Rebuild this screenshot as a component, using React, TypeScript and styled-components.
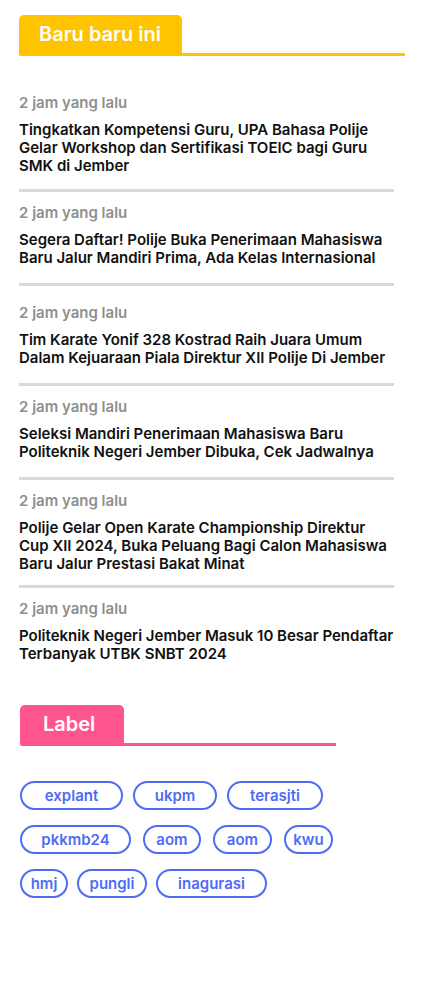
import React from 'react';
import styled, { createGlobalStyle } from 'styled-components';

interface NewsPost {
  id: number;
  time: string;
  title: string;
  extraTop?: number;
}

interface TagItem {
  name: string;
  width: number;
}

const posts: NewsPost[] = [
  { id: 1, time: '2 jam yang lalu', title: 'Tingkatkan Kompetensi Guru, UPA Bahasa Polije Gelar Workshop dan Sertifikasi TOEIC bagi Guru SMK di Jember' },
  { id: 2, time: '2 jam yang lalu', title: 'Segera Daftar! Polije Buka Penerimaan Mahasiswa Baru Jalur Mandiri Prima, Ada Kelas Internasional' },
  { id: 3, time: '2 jam yang lalu', title: 'Tim Karate Yonif 328 Kostrad Raih Juara Umum Dalam Kejuaraan Piala Direktur XII Polije Di Jember', extraTop: 6 },
  { id: 4, time: '2 jam yang lalu', title: 'Seleksi Mandiri Penerimaan Mahasiswa Baru Politeknik Negeri Jember Dibuka, Cek Jadwalnya' },
  { id: 5, time: '2 jam yang lalu', title: 'Polije Gelar Open Karate Championship Direktur Cup XII 2024, Buka Peluang Bagi Calon Mahasiswa Baru Jalur Prestasi Bakat Minat' },
  { id: 6, time: '2 jam yang lalu', title: 'Politeknik Negeri Jember Masuk 10 Besar Pendaftar Terbanyak UTBK SNBT 2024' },
];

// tag per baris, lebar diambil dari desain
const tagRows: { gap: number; tags: TagItem[] }[] = [
  {
    gap: 10,
    tags: [
      { name: 'explant', width: 103 },
      { name: 'ukpm', width: 84 },
      { name: 'terasjti', width: 96 },
    ],
  },
  {
    gap: 12,
    tags: [
      { name: 'pkkmb24', width: 111 },
      { name: 'aom', width: 58 },
      { name: 'aom', width: 59 },
      { name: 'kwu', width: 49 },
    ],
  },
  {
    gap: 9,
    tags: [
      { name: 'hmj', width: 48 },
      { name: 'pungli', width: 70 },
      { name: 'inagurasi', width: 111 },
    ],
  },
];

const GlobalStyle = createGlobalStyle`
  body {
    margin: 0;
    background: #fff;
    font-family: Inter, "Noto Sans", sans-serif;
  }
`;

const Page = styled.div`
  padding: 15px 0 60px 19px;
`;

const SectionHeader = styled.div<{ $width: number }>`
  display: flex;
  align-items: flex-end;
  width: ${({ $width }) => $width}px;
`;

const HeaderTab = styled.div<{ $color: string; $width: number; $pad: number }>`
  display: flex;
  align-items: center;
  flex: 0 0 ${({ $width }) => $width}px;
  height: 41px;
  padding: 0 0 4px ${({ $pad }) => $pad}px;
  box-sizing: border-box;
  background: ${({ $color }) => $color};
  border-radius: 5px 5px 0 2px;
  color: #fff;
  font-size: 20px;
  font-weight: 600;
`;

const HeaderLine = styled.div<{ $color: string }>`
  flex: 1;
  height: 3px;
  background: ${({ $color }) => $color};
`;

const NewsList = styled.ul`
  list-style: none;
  margin: 28px 0 0;
  padding: 0;
  width: 375px;
`;

const NewsItem = styled.li<{ $extraTop: number }>`
  padding: ${({ $extraTop }) => 12 + $extraTop}px 0 12px;
  border-bottom: 3px solid #d9d9d9;

  &:first-child {
    padding: 10px 0 14px;
  }

  &:last-child {
    border-bottom: none;
  }
`;

const NewsTime = styled.p`
  margin: 0 0 9px;
  color: #8f8f8f;
  font-size: 15px;
  font-weight: 600;
  line-height: 18px;
`;

const NewsTitle = styled.p`
  margin: 0;
  min-height: 40px;
  color: #111;
  font-size: 15px;
  font-weight: 600;
  line-height: 18px;
`;

const LabelSection = styled.section`
  margin-top: 26px;
  padding-left: 1px;
`;

const TagRows = styled.div`
  display: flex;
  flex-direction: column;
  gap: 15px;
  margin-top: 35px;
`;

const TagRow = styled.div<{ $gap: number }>`
  display: flex;
  gap: ${({ $gap }) => $gap}px;
`;

const Tag = styled.a<{ $width: number }>`
  display: flex;
  align-items: center;
  justify-content: center;
  width: ${({ $width }) => $width}px;
  height: 29px;
  box-sizing: border-box;
  border: 2px solid #4d6bf5;
  border-radius: 15px;
  color: #4d6bf5;
  font-size: 15px;
  font-weight: 600;
  text-decoration: none;
`;

const App = () => {
  return (
    <Page>
      <GlobalStyle />
      <SectionHeader $width={386}>
        <HeaderTab $color="#ffc300" $width={163} $pad={20}>
          Baru baru ini
        </HeaderTab>
        <HeaderLine $color="#ffc300" />
      </SectionHeader>

      <NewsList>
        {posts.map((post) => (
          <NewsItem key={post.id} $extraTop={post.extraTop ?? 0}>
            <NewsTime>{post.time}</NewsTime>
            <NewsTitle>{post.title}</NewsTitle>
          </NewsItem>
        ))}
      </NewsList>

      <LabelSection>
        <SectionHeader $width={316}>
          <HeaderTab $color="#ff558f" $width={104} $pad={23}>
            Label
          </HeaderTab>
          <HeaderLine $color="#ff558f" />
        </SectionHeader>

        <TagRows>
          {tagRows.map((row, i) => (
            <TagRow key={i} $gap={row.gap}>
              {row.tags.map((tag, j) => (
                <Tag key={j} href="#" $width={tag.width}>
                  {tag.name}
                </Tag>
              ))}
            </TagRow>
          ))}
        </TagRows>
      </LabelSection>
    </Page>
  );
};

export default App;
